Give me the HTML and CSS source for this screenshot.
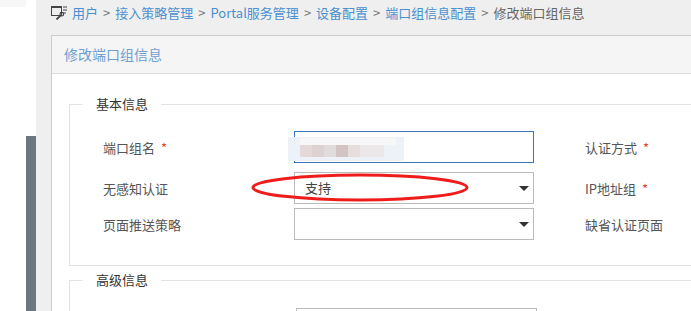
FILE: index.html
```html
<!DOCTYPE html>
<html lang="zh-CN">
<head>
    <meta charset="UTF-8">
    <title>修改端口组信息</title>
    <link rel="stylesheet" href="styles.css">
</head>
<body>
    <div class="page">
        <aside class="side">
            <div class="side-tab"></div>
            <div class="side-bar"></div>
        </aside>
        <div class="main">
            <div class="crumbs">
                <svg class="crumb-icon" width="16" height="16" viewBox="0 0 16 16">
                    <rect x="0.5" y="2.5" width="10" height="9" fill="none" stroke="#444"/>
                    <path d="M0 2h11v2H0z" fill="#444"/>
                    <path d="M12 3h4M12 6h4M12 9h3" stroke="#444" stroke-width="1.2"/>
                    <path d="M5.5 15.5l4.2-4.2" stroke="#444" stroke-width="1.8"/>
                    <circle cx="10.8" cy="10.2" r="1.8" fill="none" stroke="#444" stroke-width="1.2"/>
                </svg>
                <a href="#">用户</a><span class="sep">&gt;</span>
                <a href="#">接入策略管理</a><span class="sep">&gt;</span>
                <a href="#">Portal服务管理</a><span class="sep">&gt;</span>
                <a href="#">设备配置</a><span class="sep">&gt;</span>
                <a href="#">端口组信息配置</a><span class="sep">&gt;</span>
                <span class="cur">修改端口组信息</span>
            </div>

            <div class="panel">
                <div class="panel-head">修改端口组信息</div>
                <div class="panel-body">
                    <fieldset class="group">
                        <legend>基本信息</legend>
                        <div class="rows">
                            <div class="row row-first">
                                <label class="lbl">端口组名<i class="req">*</i></label>
                                <div class="field field-focus">
                                    <!-- 打码区域 -->
                                    <div class="blur">
                                        <div class="blur-top"></div>
                                        <div class="blur-strip"></div>
                                    </div>
                                </div>
                                <label class="lbl lbl-right">认证方式<i class="req">*</i></label>
                            </div>
                            <div class="row row-second">
                                <label class="lbl">无感知认证</label>
                                <div class="field select">支持</div>
                                <label class="lbl lbl-right">IP地址组<i class="req">*</i></label>
                            </div>
                            <div class="row">
                                <label class="lbl">页面推送策略</label>
                                <div class="field select"></div>
                                <label class="lbl lbl-right">缺省认证页面</label>
                            </div>
                        </div>
                    </fieldset>

                    <fieldset class="group group-adv">
                        <legend>高级信息</legend>
                        <div class="rows rows-adv">
                            <div class="row">
                                <label class="lbl"></label>
                                <div class="field field-adv"></div>
                            </div>
                        </div>
                    </fieldset>
                </div>
            </div>
        </div>
    </div>

    <!-- 红圈标注 -->
    <svg class="mark" width="222" height="31" viewBox="0 0 222 31">
        <ellipse cx="110" cy="15.5" rx="107" ry="12.5" fill="none" stroke="#f01c1c" stroke-width="3"/>
    </svg>
</body>
</html>
```

FILE: styles.css
```css
body {
    margin: 0;
    font-family: "Noto Sans CJK SC", "Noto Sans", sans-serif;
    font-size: 13px;
    color: #555;
    overflow: hidden;
    position: relative;
}
.page {
    display: flex;
    height: 311px;
    overflow: hidden;
}

/* 左侧栏 */
.side {
    display: flex;
    width: 36px;
    flex: none;
}
.side-tab {
    width: 26px;
    background: linear-gradient(#f7f7f7 7px, #fff 7px);
}
.side-bar {
    width: 10px;
    background: linear-gradient(#fff 136px, #6b7780 136px);
}

.main {
    flex: 1;
    background-color: #efefef;
    padding-left: 15px;
    min-width: 0;
    overflow: hidden;
}

/* 面包屑 */
.crumbs {
    height: 32px;
    padding-top: 3px;
    display: flex;
    align-items: flex-start;
    line-height: 19px;
    white-space: nowrap;
}
.crumb-icon {
    margin-right: 5px;
    margin-top: 1px;
    flex: none;
}
.crumbs a {
    color: #4a90d0;
    text-decoration: none;
}
.crumbs .sep {
    color: #777;
    margin: 0 5px;
}
.crumbs .cur {
    color: #666;
}

/* 面板 */
.panel {
    border: 1px solid #ccc;
    border-right: none;
    border-bottom: none;
    background-color: #fff;
    height: 275px;
}
.panel-head {
    height: 37px;
    line-height: 37px;
    background-color: #f5f5f5;
    border-bottom: 1px solid #ddd;
    padding-left: 12px;
    color: #6fa0d2;
    font-size: 14px;
}
.panel-body {
    padding: 21px 0 0 17px;
}

.group {
    margin: 0;
    padding: 0;
    border: 1px solid #e3e3e3;
    border-right: none;
    min-width: 0;
}
.group legend {
    margin-left: 13px;
    padding: 0 13px;
    line-height: 18px;
    color: #333;
    font-size: 13px;
}
.group-adv {
    margin-top: 5px;
    border-bottom: none;
    height: 44px;
    overflow: hidden;
}
.rows {
    padding: 18px 0 21px 33px;
}
.rows-adv {
    padding: 19px 0 0 33px;
}

.row {
    display: flex;
    align-items: center;
    height: 32px;
    margin-bottom: 4px;
}
.row-first {
    margin-bottom: 9px;
}
.lbl {
    width: 191px;
    flex: none;
    color: #555;
}
.lbl-right {
    width: auto;
    margin-left: 51px;
}
.req {
    font-style: normal;
    color: #e5403a;
    margin-left: 6px;
}

.field {
    position: relative;
    width: 240px;
    height: 32px;
    box-sizing: border-box;
    border: 1px solid #bbb;
    padding-left: 10px;
    line-height: 30px;
    color: #444;
    flex: none;
}
.field-focus {
    border-color: #3a76b2;
}
.field-adv {
    margin-left: 2px;
    width: 241px;
}
.select::after {
    content: "";
    position: absolute;
    right: 4px;
    top: 13px;
    border-top: 5px solid #333;
    border-left: 5px solid transparent;
    border-right: 5px solid transparent;
}

/* 打码 */
.blur {
    position: absolute;
    left: -7px;
    top: 5px;
    width: 116px;
    height: 24px;
    background-color: #edf2f9;
}
.blur-top {
    position: absolute;
    left: 12px;
    top: 1px;
    width: 96px;
    height: 7px;
    background-color: #f7f7f7;
}
.blur-strip {
    position: absolute;
    left: 12px;
    top: 8px;
    width: 84px;
    height: 12px;
    background: linear-gradient(90deg, #e4d8d8 0 12px, #ddd2d2 12px 24px, #e1dcdc 24px 36px, #d3c3c3 36px 48px, #e6dddd 48px 60px, #ece8ea 60px);
}

.mark {
    position: absolute;
    left: 250px;
    top: 172px;
}
```
